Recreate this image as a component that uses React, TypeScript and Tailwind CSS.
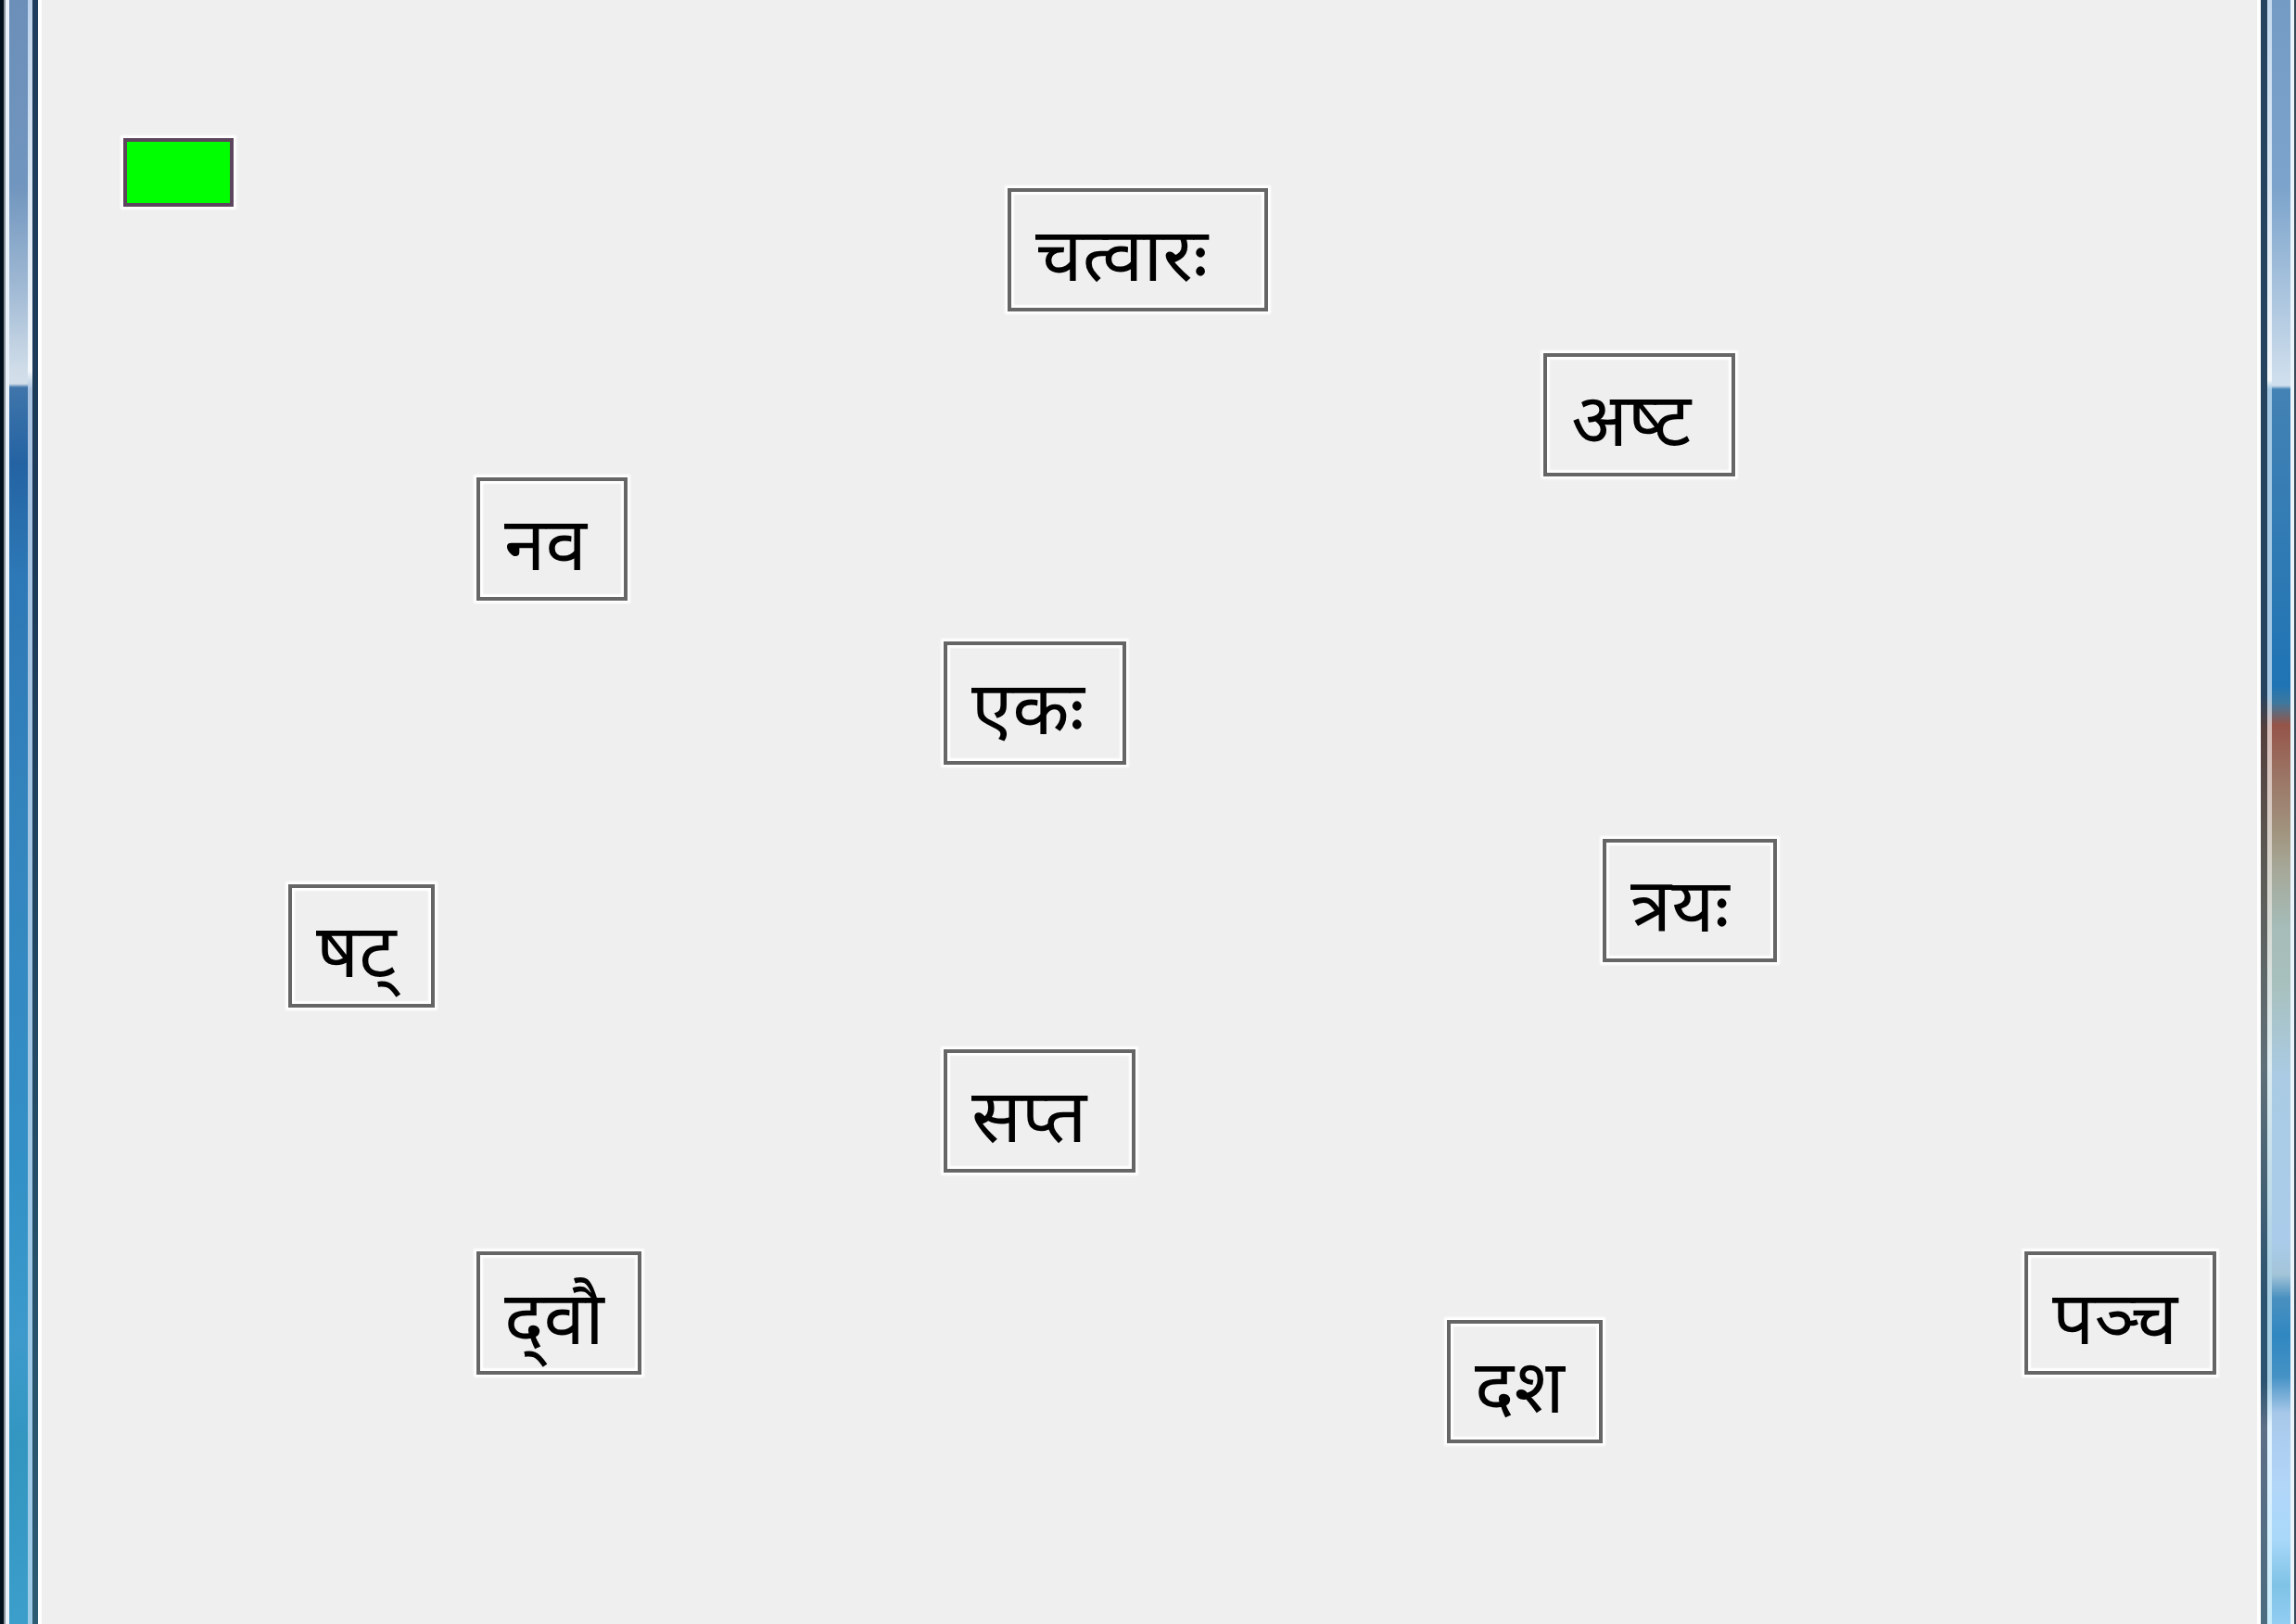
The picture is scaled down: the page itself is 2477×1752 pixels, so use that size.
const words = [
  { text: "चत्\u200dवारः", place: "left-[1087px] top-[203px] w-[281px]" },
  { text: "अष्\u200dट", place: "left-[1665px] top-[381px] w-[207px]" },
  { text: "नव", place: "left-[514px] top-[515px] w-[163px]" },
  { text: "एकः", place: "left-[1018px] top-[692px] w-[197px]" },
  { text: "त्रयः", place: "left-[1729px] top-[905px] w-[188px]" },
  { text: "षट्", place: "left-[311px] top-[954px] w-[158px]" },
  { text: "सप्त", place: "left-[1018px] top-[1132px] w-[207px]" },
  { text: "द्\u200cवौ", place: "left-[514px] top-[1350px] w-[178px]" },
  { text: "दश", place: "left-[1561px] top-[1424px] w-[168px]" },
  { text: "पञ्\u200dच", place: "left-[2184px] top-[1350px] w-[207px]" },
];

export default function App() {
  return (
    <div className="flex min-h-screen bg-[#efefef] font-['Noto_Sans','Noto_Sans_Devanagari',sans-serif] text-black">
      <div className="flex w-[45px] shrink-0 border-r-4 border-white">
        <div className="w-1 bg-[#020f1c]" />
        <div className="w-[2px] bg-[#8a939c]" />
        <div className="w-1 bg-[#eaf2fa]" />
        <div className="w-5 bg-[linear-gradient(to_bottom,#6b8fb9_0px,#7095be_200px,#a0b9d4_310px,#d0dde9_400px,#d3dfe9_414px,#3f75aa_418px,#2463a3_500px,#2d78b6_620px,#3485be_900px,#3390c6_1250px,#3d9acb_1450px,#3296c0_1560px,#3c9ecb_1752px)]" />
        <div className="w-[5px] bg-[linear-gradient(to_bottom,#bdd2ea_0px,#f4f8fb_400px,#a9c2df_420px,#9dcbe6_1752px)]" />
        <div className="w-[6px] bg-[linear-gradient(to_bottom,#1f3d5c_0px,#1c3a58_600px,#2c5b72_1752px)]" />
      </div>
      <main className="relative flex-1">
        <div className="absolute inset-y-0 -left-[45px] right-0">
          <div className="absolute left-[133px] top-[149px] h-[74px] w-[119px] border-4 border-[#5d465d] bg-[#00ff00] shadow-[0_0_2px_3px_white]" />
          {words.map((w) => (
            <button
              key={w.text}
              type="button"
              className={`absolute h-[133px] border-4 border-[#666666] pl-[26px] text-left text-[80px] leading-[130px] whitespace-nowrap shadow-[0_0_2px_3px_white,inset_0_0_2px_3px_white] ${w.place}`}
            >
              {w.text}
            </button>
          ))}
        </div>
      </main>
      <div className="flex w-[42px] shrink-0 border-l-4 border-white">
        <div className="w-[7px] bg-[linear-gradient(to_bottom,#26435f_0px,#26435f_750px,#54403d_785px,#5d5d58_950px,#5f7078_1150px,#2c5470_1400px,#2c5470_1490px,#5c6f86_1540px,#4c6c80_1752px)]" />
        <div className="w-[5px] bg-[linear-gradient(to_bottom,#c4d9ee_0px,#f4f8fb_410px,#a5c9e4_420px,#a5c9e4_750px,#d8bdb7_785px,#d5d5cc_950px,#dcecf0_1150px,#a5cde2_1400px,#a5cde2_1490px,#e2f3ff_1540px,#c8ecfb_1752px)]" />
        <div className="w-5 bg-[linear-gradient(to_bottom,#749bc4_0px,#7ba3cb_200px,#d0dfed_412px,#d0dfed_416px,#4382b4_420px,#1f74b4_740px,#3d789f_758px,#955448_782px,#9a6e5f_825px,#a19580_900px,#a6a797_935px,#a5bcb8_1000px,#a8c0bd_1060px,#aacbe3_1160px,#aaccea_1340px,#a3c4d8_1375px,#4a90c0_1400px,#3088c1_1440px,#4592c5_1485px,#a8c8e9_1525px,#b2d6f8_1600px,#a9d8f9_1660px,#7fc3e6_1710px,#92cdf2_1752px)]" />
        <div className="w-1 bg-[#e9f3fa]" />
        <div className="w-[2px] bg-[#3a4a58]" />
      </div>
    </div>
  );
}
